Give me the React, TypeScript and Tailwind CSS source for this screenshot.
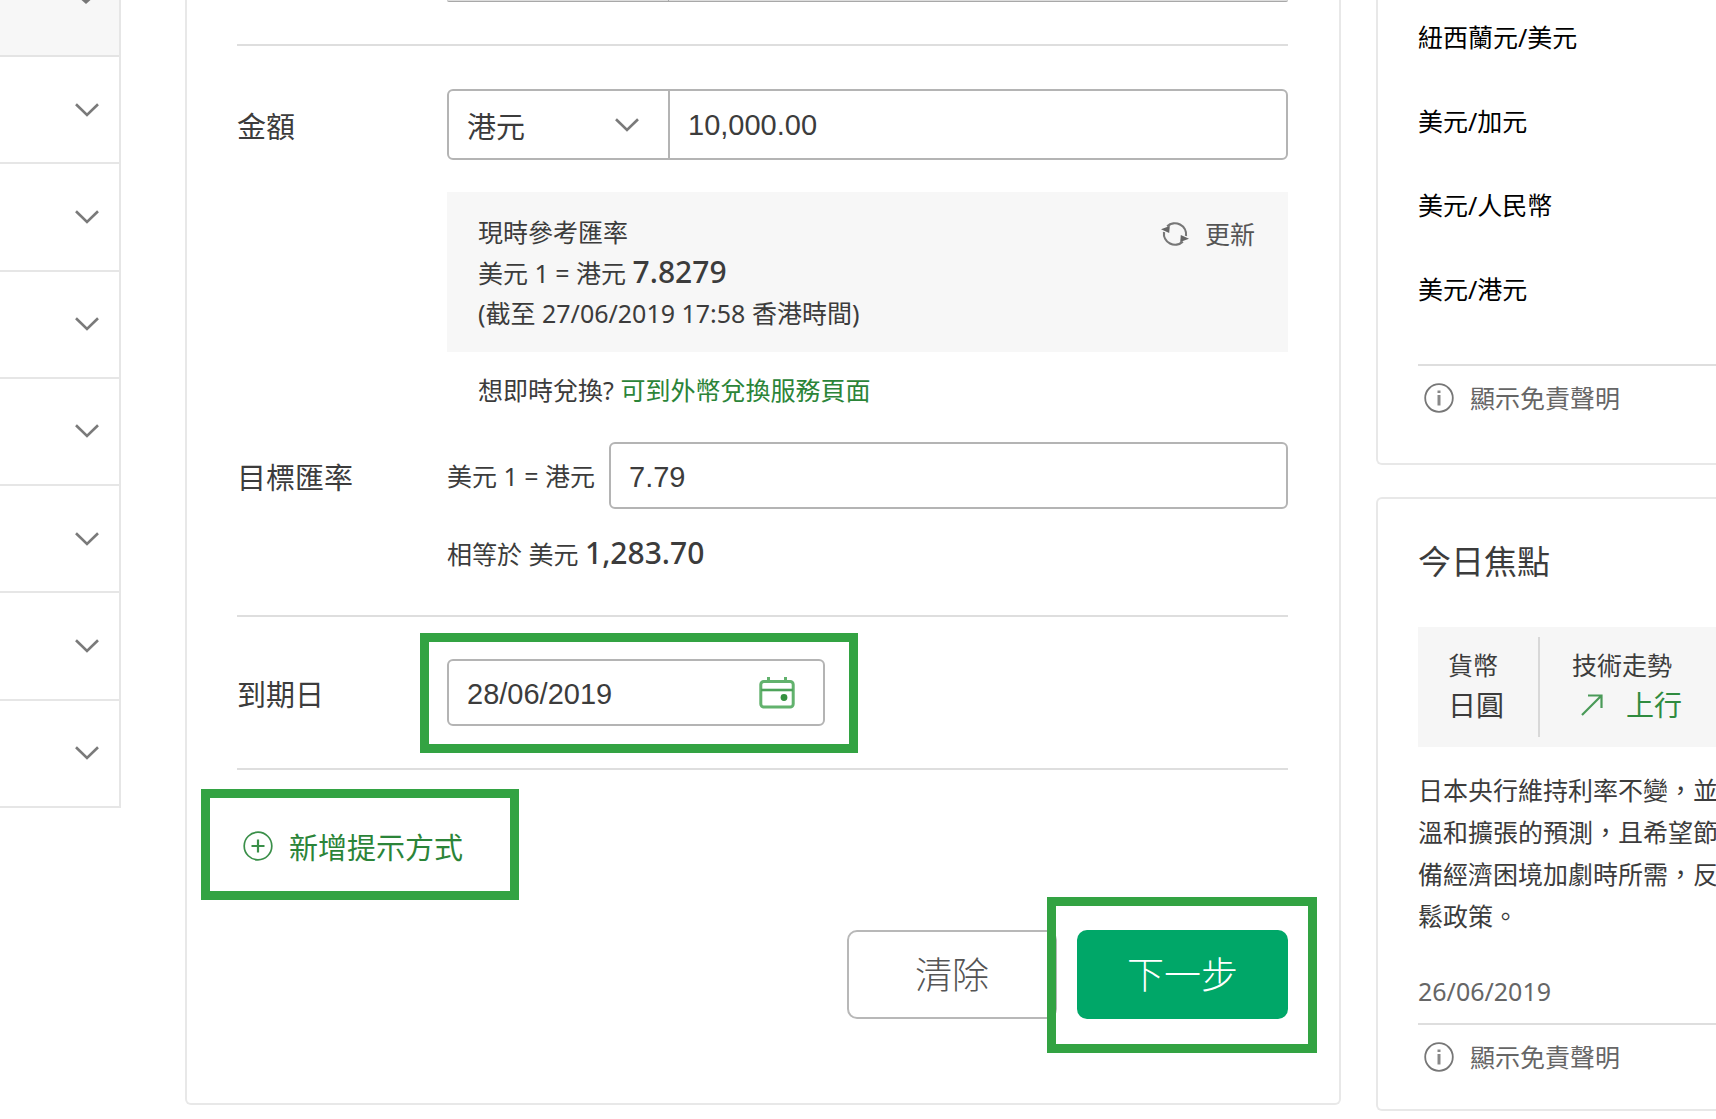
import { useState } from 'react'
import type { ReactNode } from 'react'

const menuItems = ['menu-1', 'menu-2', 'menu-3', 'menu-4', 'menu-5', 'menu-6', 'menu-7']

const pairs = ['紐西蘭元/美元', '美元/加元', '美元/人民幣', '美元/港元']

const newsLines = [
  '日本央行維持利率不變，並',
  '溫和擴張的預測，且希望節',
  '備經濟困境加劇時所需，反',
  '鬆政策。',
]

function ChevronIcon() {
  return (
    <svg className="w-6 h-3.5" viewBox="0 0 24 14" fill="none" stroke="#7a7a7a" strokeWidth="2.6">
      <path d="M1 1.2 L12 12 L23 1.2" />
    </svg>
  )
}

function RefreshIcon() {
  return (
    <svg className="w-7 h-7" viewBox="0 0 28 28" fill="none" stroke="#777" strokeWidth="2.2">
      <path d="M6.2 6.4 A11.2 11.2 0 0 1 25 16" />
      <path d="M21.8 21.6 A11.2 11.2 0 0 1 3 12" />
      <path d="M0 9.2 L8.8 6 L8.2 13 Z" fill="#666" stroke="none" />
      <path d="M28 18.8 L19.2 22 L19.8 15 Z" fill="#666" stroke="none" />
    </svg>
  )
}

function CalendarIcon() {
  return (
    <svg className="w-9 h-8" viewBox="0 0 36 32" fill="none" stroke="#62b26d" strokeWidth="3">
      <rect x="1.8" y="4.5" width="32.4" height="25.5" rx="3" />
      <path d="M2 13 H34" stroke="#4da35a" strokeWidth="2.6" />
      <path d="M9.5 0 V6 M26.5 0 V6" />
      <circle cx="25" cy="20.5" r="3.4" fill="#35913f" stroke="none" />
    </svg>
  )
}

function PlusIcon() {
  return (
    <svg className="w-[30px] h-[30px]" viewBox="0 0 30 30" fill="none" stroke="#3a8f49" strokeWidth="1.7">
      <circle cx="15" cy="15" r="13.8" />
      <path d="M15 8.5 V21.5 M8.5 15 H21.5" strokeWidth="2.2" />
    </svg>
  )
}

function InfoIcon() {
  return (
    <svg className="w-[30px] h-[30px]" viewBox="0 0 30 30" fill="none" stroke="#777" strokeWidth="1.8">
      <circle cx="15" cy="15" r="13.8" />
      <path d="M15 12 V22.5" stroke="#888" strokeWidth="3" />
      <path d="M15 7.5 V10" stroke="#888" strokeWidth="3" />
    </svg>
  )
}

function TrendUpIcon() {
  return (
    <svg className="w-6 h-6" viewBox="0 0 24 24" fill="none" stroke="#4a9a58" strokeWidth="2.2">
      <path d="M2 22 L21 3 M8 2.5 H21.5 V15" />
    </svg>
  )
}

function Divider() {
  return <hr className="border-0 h-0.5 bg-[#dedede]" />
}

function Disclaimer() {
  return (
    <button type="button" className="flex items-center gap-4 pl-1.5 text-[25px] leading-10 text-[#666]">
      <InfoIcon />
      顯示免責聲明
    </button>
  )
}

function Highlight({ className }: { className: string }) {
  return <div className={`absolute border-[9px] border-[#33a343] pointer-events-none ${className}`} />
}

function Row({ label, htmlFor, children }: { label: string; htmlFor: string; children: ReactNode }) {
  return (
    <div className="grid grid-cols-[210px_1fr] items-center">
      <label htmlFor={htmlFor} className="text-[29px] leading-10 pt-1">
        {label}
      </label>
      {children}
    </div>
  )
}

function Sidebar() {
  return (
    <aside className="w-[121px] h-[808px] shrink-0 flex flex-col border-r-2 border-[#e6e6e6]">
      <div className="h-[57px] flex justify-end items-start pr-7 bg-[#f7f7f7] border-b-2 border-[#e4e4e4]">
        <svg className="w-2.5 h-1" viewBox="0 0 10 4" fill="#777">
          <path d="M0.5 0 H9.5 L5 4 Z" />
        </svg>
      </div>
      {menuItems.map((id) => (
        <button
          key={id}
          type="button"
          aria-label={id}
          className="flex-1 flex items-center justify-end pr-5 border-b-2 border-[#e6e6e6]"
        >
          <ChevronIcon />
        </button>
      ))}
    </aside>
  )
}

function OrderForm() {
  const [currency, setCurrency] = useState('HKD')
  const [amount, setAmount] = useState('10,000.00')
  const [rate, setRate] = useState('7.79')
  const [date, setDate] = useState('28/06/2019')

  return (
    <form className="flex-1 min-w-0 border-2 border-t-0 border-[#e8e8e8] rounded-b-md pl-[50px] pr-[51px] pb-[84px]">
      {/* bottom edge of the previous field */}
      <div className="ml-[210px] h-0.5 flex bg-[#ddd] border-b border-[#a8a8a8] rounded-b-sm">
        <div className="w-[222px] border-r border-[#a8a8a8]" />
      </div>

      <div className="mt-[42px] mb-[43px]">
        <Divider />
      </div>

      <Row label="金額" htmlFor="amount">
        <div className="flex h-[71px] border-2 border-[#b4b4b4] rounded-md">
          <div className="relative w-[221px] border-r-2 border-[#b4b4b4]">
            <select
              aria-label="貨幣"
              value={currency}
              onChange={(e) => setCurrency(e.target.value)}
              className="appearance-none w-full h-full pl-[18px] pt-1 bg-transparent text-[29px] outline-none"
            >
              <option value="HKD">港元</option>
              <option value="USD">美元</option>
            </select>
            <div className="absolute right-[29px] inset-y-0 flex items-center pointer-events-none">
              <ChevronIcon />
            </div>
          </div>
          <input
            id="amount"
            value={amount}
            onChange={(e) => setAmount(e.target.value)}
            className="flex-1 min-w-0 px-[18px] pt-0.5 font-['Liberation_Sans',sans-serif] text-[29px] outline-none"
          />
        </div>
      </Row>

      <div className="ml-[210px]">
        <div className="mt-8 h-40 flex justify-between items-start bg-[#f7f7f7] pl-[31px] pr-[33px] pt-5 text-[25px] leading-10">
          <div>
            <p>現時參考匯率</p>
            <p>
              美元 1 = 港元 <span className="text-[30px] font-medium">7.8279</span>
            </p>
            <p>(截至 27/06/2019 17:58 香港時間)</p>
          </div>
          <button type="button" className="flex items-center gap-4 pt-0.5 text-[#555]">
            <RefreshIcon />
            更新
          </button>
        </div>
        <p className="mt-[18px] mb-8 pl-[31px] text-[25px] leading-10">
          想即時兌換?{' '}
          <a href="#exchange" className="text-[#2b8438]">
            可到外幣兌換服務頁面
          </a>
        </p>
      </div>

      <Row label="目標匯率" htmlFor="rate">
        <div className="flex items-center text-[25px]">
          <span className="w-[162px] pt-0.5">美元 1 = 港元</span>
          <input
            id="rate"
            value={rate}
            onChange={(e) => setRate(e.target.value)}
            className="flex-1 min-w-0 h-[67px] px-[18px] pt-1 border-2 border-[#b4b4b4] rounded-md font-['Liberation_Sans',sans-serif] text-[29px] outline-none"
          />
        </div>
      </Row>
      <p className="ml-[210px] mt-6 text-[25px] leading-10">
        相等於 美元 <span className="text-[30px] font-medium">1,283.70</span>
      </p>

      <div className="mt-[41px] mb-[42px]">
        <Divider />
      </div>

      <Row label="到期日" htmlFor="date">
        <div className="relative w-[378px] h-[67px] flex items-center border-2 border-[#b4b4b4] rounded-md pr-7">
          <input
            id="date"
            value={date}
            onChange={(e) => setDate(e.target.value)}
            className="flex-1 min-w-0 h-full px-[18px] pt-1 font-['Liberation_Sans',sans-serif] text-[29px] outline-none"
          />
          <button type="button" aria-label="選擇日期">
            <CalendarIcon />
          </button>
          <Highlight className="-top-7 -bottom-[29px] -left-[29px] -right-[35px]" />
        </div>
      </Row>

      <div className="mt-[42px]">
        <Divider />
      </div>

      <button
        type="button"
        className="relative mt-[54px] ml-1.5 flex items-center gap-4 text-[29px] leading-10 text-[#2b8438]"
      >
        <PlusIcon />
        <span className="pt-1">新增提示方式</span>
        <Highlight className="-top-[35px] -bottom-8 -left-[42px] -right-14" />
      </button>

      <div className="mt-[62px] flex justify-end gap-5 text-[37px] font-light">
        <button
          type="reset"
          className="w-[210px] h-[89px] border-2 border-[#b8b8b8] rounded-[10px] text-[#555]"
        >
          清除
        </button>
        <div className="relative">
          <button type="button" className="w-[211px] h-[89px] rounded-[10px] bg-[#00a768] text-white">
            下一步
          </button>
          <Highlight className="-top-[33px] -bottom-[34px] -left-[30px] -right-[29px]" />
        </div>
      </div>
    </form>
  )
}

function RightColumn() {
  return (
    <div className="w-[340px] shrink-0 overflow-hidden whitespace-nowrap">
      <section className="border-l-2 border-b-2 border-[#e8e8e8] rounded-bl-md pl-10 pt-[17px] pb-[45px]">
        <ul className="flex flex-col gap-11 mb-[55px] text-[25px] leading-10 text-black">
          {pairs.map((pair) => (
            <li key={pair}>{pair}</li>
          ))}
        </ul>
        <Divider />
        <div className="mt-3">
          <Disclaimer />
        </div>
      </section>

      <section className="mt-8 border-2 border-r-0 border-[#e8e8e8] rounded-l-md pl-10 pt-10 pb-8">
        <h2 className="text-[33px] leading-[46px]">今日焦點</h2>
        <div className="mt-[42px] h-[120px] flex items-center bg-[#f6f6f6] text-[25px] leading-10">
          <div className="h-[100px] w-[122px] pl-[30px] pt-2 border-r-2 border-[#d8d8d8]">
            <p>貨幣</p>
            <p className="text-[28px]">日圓</p>
          </div>
          <div className="h-[100px] pl-8 pt-2">
            <p>技術走勢</p>
            <p className="flex items-center gap-[22px] pl-2 text-[28px] text-[#2f8b3f]">
              <TrendUpIcon />
              上行
            </p>
          </div>
        </div>
        <p className="mt-[22px] text-[25px] leading-[42px]">
          {newsLines.map((line) => (
            <span key={line} className="block">
              {line}
            </span>
          ))}
        </p>
        <p className="mt-[34px] mb-3 text-[25px] leading-10 text-[#666]">26/06/2019</p>
        <Divider />
        <div className="mt-3">
          <Disclaimer />
        </div>
      </section>
    </div>
  )
}

export default function App() {
  return (
    <div
      lang="zh-Hant"
      className="flex items-start bg-white text-[#3c3c3c] overflow-hidden font-['Noto_Sans','Noto_Sans_CJK_TC',sans-serif]"
    >
      <Sidebar />
      <div className="flex-1 min-w-0 flex items-start pl-16 gap-[35px]">
        <OrderForm />
        <RightColumn />
      </div>
    </div>
  )
}
